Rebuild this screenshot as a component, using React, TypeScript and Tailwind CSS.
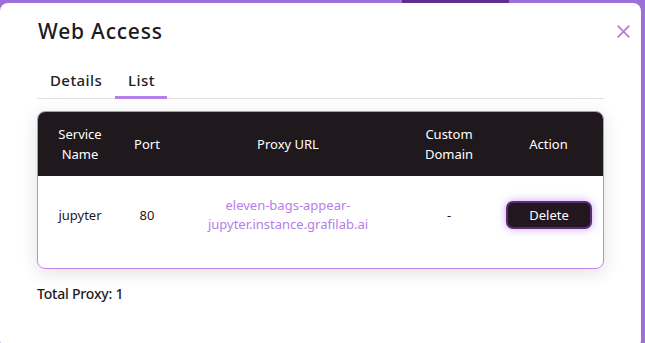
import React from "react";

export default function App() {
  const font = { fontFamily: '"Noto Sans", "Open Sans", sans-serif' };
  return (
    <div className="w-[645px] h-[343px] bg-[#9d6fd8] overflow-hidden relative" style={font}>
      <div className="absolute left-[402px] top-0 w-[107px] h-[3px] bg-[#5e2d8f]" />
      <div className="absolute left-0 top-[3px] w-[641px] h-[345px] bg-white rounded-[8px] flex flex-col">
        <div className="flex items-center justify-between pl-[38px] pr-[11px] pt-[13px]">
          <h1 className="text-[21px] font-medium text-[#1c1a1d] tracking-[0.8px]">Web Access</h1>
          <svg width="13" height="13" viewBox="0 0 13 13" className="-mt-[1px]">
            <path d="M1.2 1.2 L11.8 11.8 M11.8 1.2 L1.2 11.8" stroke="#b47be6" strokeWidth="1.8" strokeLinecap="round" />
          </svg>
        </div>
        <div className="mx-[37px] mt-[21px] border-b border-[#e2dfe4] flex">
          <div className="pl-[13px] pr-[13px] pb-[7px] text-[15px] font-medium text-[#222] tracking-[0.4px]">Details</div>
          <div className="px-[13px] pb-[5px] text-[15px] font-medium text-[#222] tracking-[0.4px] border-b-[3px] border-[#b57ee8] -mb-[1px] w-[52px] text-center">List</div>
        </div>
        <div className="mx-[37px] mt-[12px] rounded-[8px] border border-[#c586e8] shadow-[0_4px_18px_rgba(0,0,0,0.12)] overflow-hidden">
          <div className="grid grid-cols-[84px_50px_232px_90px_1fr] bg-[#1f181d] h-[64px] items-center text-white text-[13px] leading-[20px] text-center">
            <div>Service<br />Name</div>
            <div>Port</div>
            <div>Proxy URL</div>
            <div>Custom<br />Domain</div>
            <div>Action</div>
          </div>
          <div className="grid grid-cols-[84px_50px_232px_90px_1fr] h-[92px] pb-[14px] items-center text-[13px] leading-[19px] text-center text-[#1c1a1d]">
            <div>jupyter</div>
            <div>80</div>
            <div className="text-[#b57ee8]">eleven-bags-appear-<br />jupyter.instance.grafilab.ai</div>
            <div>-</div>
            <div className="flex justify-center">
              <button className="w-[86px] h-[28px] ml-[1px] rounded-[7px] bg-[#22161f] border-2 border-[#5a2c78] text-white text-[13px] shadow-[0_0_8px_rgba(190,120,240,0.7)]">Delete</button>
            </div>
          </div>
        </div>
        <div className="mx-[37px] mt-[14px] text-[14px] font-medium text-[#1c1a1d] tracking-[-0.2px]">Total Proxy: 1</div>
      </div>
    </div>
  );
}
